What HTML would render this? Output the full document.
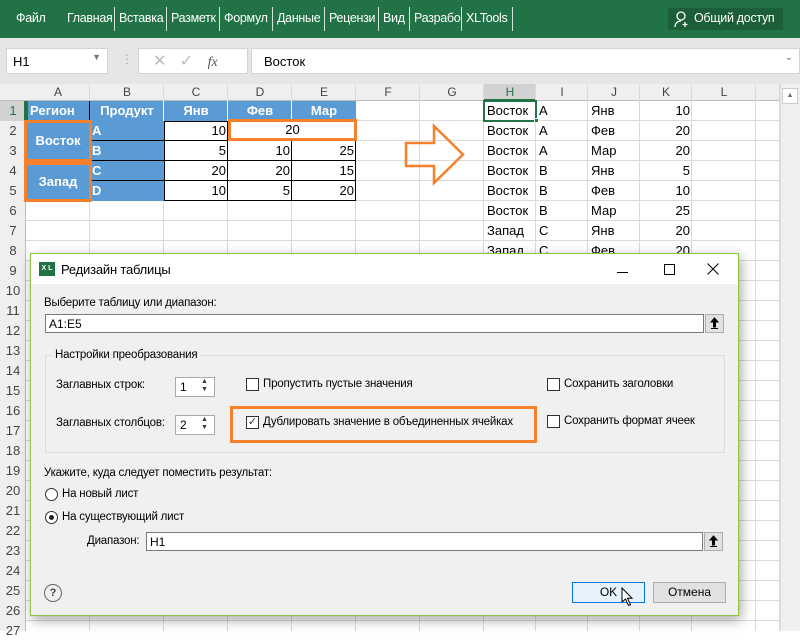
<!DOCTYPE html>
<html><head><meta charset="utf-8">
<style>
*{box-sizing:border-box;margin:0;padding:0}
body{width:800px;height:631px;overflow:hidden;background:#fff;font-family:"Liberation Sans","DejaVu Sans",sans-serif;position:relative}
.a{position:absolute}
.rib{left:0;top:0;width:800px;height:38px;background:#217346;color:#fff;font-size:12.5px;letter-spacing:-0.3px}
.rib span{position:absolute;top:11px}
.sep{position:absolute;top:7px;width:1px;height:24px;background:#fff;opacity:.8}
.c{position:absolute;font-size:13px;line-height:20px;white-space:nowrap}
.ch{position:absolute;top:84px;height:17px;font-size:12px;color:#444;text-align:center;line-height:17px}
.rh{position:absolute;left:0;width:26px;height:20px;font-size:13px;color:#444;text-align:center;line-height:20px}
.blue{background:#5b9bd5;color:#fff;font-weight:bold}
.dl{font-size:11.5px;letter-spacing:-0.2px;color:#000;position:absolute;white-space:nowrap}
.inp{position:absolute;background:#fff;border:1px solid #7a7a7a;font-size:12px;padding:2px 3px}
.ub{position:absolute;width:19px;height:19px;background:#e1e1e1;border:1px solid #adadad}
.cb{position:absolute;width:13px;height:13px;border:1px solid #333;background:#fff}
</style></head><body>
<div class="a rib">
<span style="left:16px">Файл</span>
<span style="left:67px">Главная</span><div class="sep" style="left:114px"></div>
<span style="left:119px">Вставка</span><div class="sep" style="left:166px"></div>
<span style="left:171px">Разметк</span><div class="sep" style="left:219px"></div>
<span style="left:224px">Формул</span><div class="sep" style="left:272px"></div>
<span style="left:277px">Данные</span><div class="sep" style="left:324px"></div>
<span style="left:329px">Рецензи</span><div class="sep" style="left:378px"></div>
<span style="left:383px">Вид</span><div class="sep" style="left:409px"></div>
<span style="left:414px">Разрабо</span><div class="sep" style="left:461px"></div>
<span style="left:466px">XLTools</span><div class="sep" style="left:512px"></div>
<div class="a" style="left:668px;top:8px;width:115px;height:22px;background:#1b5e38"></div>
<svg class="a" style="left:673px;top:10px" width="18" height="18" viewBox="0 0 18 18" fill="none" stroke="#fff" stroke-width="1.3"><circle cx="8" cy="6" r="4"/><path d="M2 17c0-4 3-6 6-6M12 12v5M9.5 14.5h5"/></svg>
<span style="left:694px">Общий доступ</span>
</div>
<div class="a" style="left:0;top:38px;width:800px;height:46px;background:#e6e6e6"></div>
<div class="a" style="left:6px;top:48px;width:102px;height:26px;background:#fff;border:1px solid #d4d4d4;font-size:13px;padding:5px 6px">H1<span style="position:absolute;right:6px;top:3px;color:#777;font-size:9px">▼</span></div>
<div class="a" style="left:121px;top:52px;color:#aaa;font-size:12px">⋮</div>
<div class="a" style="left:138px;top:48px;width:110px;height:26px;background:#fff;border:1px solid #d4d4d4;color:#bbb;font-size:16px;padding:2px 14px">✕ &nbsp; ✓ <span style="color:#555;font-style:italic;font-family:'Liberation Serif',serif;font-size:14px;margin-left:10px">fx</span></div>
<div class="a" style="left:251px;top:48px;width:549px;height:26px;background:#fff;border:1px solid #d4d4d4;font-size:13px;padding:5px 12px">Восток<span style="position:absolute;right:6px;top:3px;color:#777;font-size:10px">⌄</span></div>
<div class="a" style="left:0;top:84px;width:780px;height:17px;background:#efefef;border-bottom:1px solid #bdbdbd"></div>
<div class="a" style="left:0;top:101px;width:26px;height:530px;background:#efefef;border-right:1px solid #bdbdbd"></div>
<div class="a" style="left:484px;top:84px;width:52px;height:17px;background:#d2d2d2;border-bottom:2px solid #217346"></div>
<div class="a" style="left:0;top:101px;width:26px;height:20px;background:#d2d2d2;border-right:2px solid #217346"></div>
<div class="a" style="left:26px;top:101px;width:754px;height:530px;background-image:repeating-linear-gradient(to bottom,transparent 0 19px,#dadada 19px 20px)"></div>
<div class="a" style="left:780px;top:84px;width:20px;height:547px;background:#f0f0f0;border-left:1px solid #ddd"></div>
<div class="a" style="left:782px;top:88px;width:16px;height:16px;background:#fff;border:1px solid #ccc;font-size:7px;text-align:center;color:#666;line-height:14px">▲</div>
<div id="g"></div>
<script>
var cols=[26,90,164,228,292,356,420,484,536,588,640,692,756,780],L="ABCDEFGHIJKL",h="";
for(var i=0;i<12;i++){h+='<div class="ch" style="left:'+cols[i]+'px;width:'+(cols[i+1]-cols[i])+'px;'+(i==7?'color:#217346':'')+'">'+L[i]+'</div>';}
for(var i=1;i<cols.length;i++){h+='<div class="a" style="left:'+(cols[i]-1)+'px;top:84px;width:1px;height:547px;background:#dadada"></div>';}
for(var r=1;r<=27;r++){h+='<div class="rh" style="top:'+(101+20*(r-1))+'px;'+(r==1?'color:#217346':'')+'">'+r+'</div>';}
document.getElementById('g').innerHTML=h;
</script>
<div class="c blue" style="left:26px;top:101px;width:330px;height:20px"></div>
<div class="c blue" style="left:26px;top:121px;width:138px;height:80px"></div>
<div class="c" style="left:164px;top:121px;width:192px;height:80px;background:#fff;border:1px solid #000"></div>
<div class="a" style="left:164px;top:140px;width:192px;height:1px;background:#000"></div>
<div class="a" style="left:164px;top:160px;width:192px;height:1px;background:#000"></div>
<div class="a" style="left:164px;top:180px;width:192px;height:1px;background:#000"></div>
<div class="a" style="left:227px;top:121px;width:1px;height:80px;background:#000"></div>
<div class="a" style="left:291px;top:141px;width:1px;height:60px;background:#000"></div>
<div class="a" style="left:89px;top:101px;width:1px;height:100px;background:#000"></div>
<div class="a" style="left:163px;top:101px;width:1px;height:20px;background:#fff"></div>
<div class="a" style="left:227px;top:101px;width:1px;height:20px;background:#fff"></div>
<div class="a" style="left:291px;top:101px;width:1px;height:20px;background:#fff"></div>
<div class="a" style="left:90px;top:140px;width:74px;height:1px;background:#000"></div>
<div class="a" style="left:90px;top:160px;width:74px;height:1px;background:#000"></div>
<div class="a" style="left:90px;top:180px;width:74px;height:1px;background:#000"></div>
<div class="a" style="left:26px;top:101px;width:2px;height:20px;background:#217346"></div>
<div class="c blue" style="left:30px;top:101px">Регион</div>
<div class="c blue" style="left:90px;top:101px;width:74px;text-align:center;background:none">Продукт</div>
<div class="c blue" style="left:164px;top:101px;width:64px;text-align:center;background:none">Янв</div>
<div class="c blue" style="left:228px;top:101px;width:64px;text-align:center;background:none">Фев</div>
<div class="c blue" style="left:292px;top:101px;width:64px;text-align:center;background:none">Мар</div>
<div class="c blue" style="left:24px;top:120px;width:68px;height:42px;border:3px solid #f7802b;text-align:center;line-height:36px">Восток</div>
<div class="c blue" style="left:24px;top:162px;width:68px;height:40px;border:3px solid #f7802b;text-align:center;line-height:34px">Запад</div>
<div class="c" style="left:92px;top:121px;color:#fff;font-weight:bold">A</div>
<div class="c" style="left:92px;top:141px;color:#fff;font-weight:bold">B</div>
<div class="c" style="left:92px;top:161px;color:#fff;font-weight:bold">C</div>
<div class="c" style="left:92px;top:181px;color:#fff;font-weight:bold">D</div>
<div class="c" style="left:164px;top:121px;width:62px;text-align:right">10</div>
<div class="c" style="left:164px;top:141px;width:62px;text-align:right">5</div>
<div class="c" style="left:164px;top:161px;width:62px;text-align:right">20</div>
<div class="c" style="left:164px;top:181px;width:62px;text-align:right">10</div>
<div class="c" style="left:228px;top:141px;width:62px;text-align:right">10</div>
<div class="c" style="left:228px;top:161px;width:62px;text-align:right">20</div>
<div class="c" style="left:228px;top:181px;width:62px;text-align:right">5</div>
<div class="c" style="left:292px;top:141px;width:62px;text-align:right">25</div>
<div class="c" style="left:292px;top:161px;width:62px;text-align:right">15</div>
<div class="c" style="left:292px;top:181px;width:62px;text-align:right">20</div>
<div class="c" style="left:228px;top:119px;width:129px;height:22px;border:3px solid #f7802b;background:#fff;text-align:center;line-height:16px">20</div>
<svg class="a" style="left:403px;top:123px" width="64" height="64" viewBox="0 0 64 64"><path d="M3 20H31V3L60 31.5L31 60V43H3Z" fill="none" stroke="#f7802b" stroke-width="2.5"/></svg>
<div id="rd"></div>
<script>
var d=[["Восток","A","Янв",10],["Восток","A","Фев",20],["Восток","A","Мар",20],["Восток","B","Янв",5],["Восток","B","Фев",10],["Восток","B","Мар",25],["Запад","C","Янв",20],["Запад","C","Фев",20]],h="";
d.forEach(function(r,i){var t=101+20*i;h+='<div class="c" style="left:487px;top:'+t+'px">'+r[0]+'</div><div class="c" style="left:539px;top:'+t+'px">'+r[1]+'</div><div class="c" style="left:591px;top:'+t+'px">'+r[2]+'</div><div class="c" style="left:640px;top:'+t+'px;width:50px;text-align:right">'+r[3]+'</div>';});
document.getElementById('rd').innerHTML=h;
</script>
<div class="a" style="left:483px;top:100px;width:54px;height:22px;border:2px solid #217346"></div>
<div class="a" style="left:534px;top:118px;width:5px;height:5px;background:#217346;border:1px solid #fff"></div>
<div class="a" style="left:30px;top:253px;width:709px;height:363px;background:#f0f0f0;border:1px solid #8cc63f;box-shadow:2px 4px 12px rgba(0,0,0,.35)">
<div class="a" style="left:0;top:0;width:707px;height:30px;background:#fff"></div>
<div class="a" style="left:8px;top:8px;width:16px;height:14px;background:#217346;color:#fff;font-size:7px;font-weight:bold;line-height:14px;text-align:center">X L</div>
<div class="dl" style="left:30px;top:8px;font-size:13px">Редизайн таблицы</div>
<div class="a" style="left:586px;top:18px;width:11px;height:1px;background:#000"></div>
<div class="a" style="left:633px;top:10px;width:11px;height:11px;border:1px solid #000"></div>
<svg class="a" style="left:676px;top:9px" width="12" height="12" viewBox="0 0 12 12"><path d="M0.5 0.5L11.5 11.5M11.5 0.5L0.5 11.5" stroke="#000" stroke-width="1"/></svg>
<div class="dl" style="left:13px;top:43px">Выберите таблицу или диапазон:</div>
<div class="inp" style="left:14px;top:60px;width:659px;height:19px">A1:E5</div>
<div class="ub" style="left:674px;top:60px"><svg width="17" height="17" viewBox="0 0 17 17"><path d="M8.5 3L5 7H7.5V12H9.5V7H12Z M5 13.5H12" fill="#000" stroke="#000" stroke-width="1"/></svg></div>
<div class="a" style="left:14px;top:101px;width:680px;height:98px;border:1px solid #dcdcdc"></div>
<div class="dl" style="left:21px;top:95px;background:#f0f0f0;padding:0 3px">Настройки преобразования</div>
<div class="dl" style="left:25px;top:125px">Заглавных строк:</div>
<div class="inp" style="left:144px;top:123px;width:40px;height:20px;border-color:#aaa;padding:2px 4px">1</div>
<div class="dl" style="left:170px;top:124px;font-size:7px;line-height:8px;color:#333">▲<br>▼</div>
<div class="dl" style="left:25px;top:163px">Заглавных столбцов:</div>
<div class="inp" style="left:144px;top:161px;width:40px;height:20px;border-color:#aaa;padding:2px 4px">2</div>
<div class="dl" style="left:170px;top:162px;font-size:7px;line-height:8px;color:#333">▲<br>▼</div>
<div class="cb" style="left:215px;top:124px"></div>
<div class="dl" style="left:232px;top:124px">Пропустить пустые значения</div>
<div class="a" style="left:199px;top:152px;width:307px;height:37px;border:3px solid #f7802b"></div>
<div class="cb" style="left:215px;top:162px;font-size:11px;line-height:10px;text-align:center;color:#333">✓</div>
<div class="dl" style="left:232px;top:162px">Дублировать значение в объединенных ячейках</div>
<div class="cb" style="left:516px;top:124px"></div>
<div class="dl" style="left:533px;top:124px">Сохранить заголовки</div>
<div class="cb" style="left:516px;top:161px"></div>
<div class="dl" style="left:533px;top:161px">Сохранить формат ячеек</div>
<div class="dl" style="left:13px;top:213px">Укажите, куда следует поместить результат:</div>
<div class="a" style="left:14px;top:234px;width:13px;height:13px;border:1px solid #333;border-radius:50%;background:#fff"></div>
<div class="dl" style="left:31px;top:234px">На новый лист</div>
<div class="a" style="left:14px;top:257px;width:13px;height:13px;border:1px solid #333;border-radius:50%;background:#fff"><div class="a" style="left:3px;top:3px;width:5px;height:5px;border-radius:50%;background:#222"></div></div>
<div class="dl" style="left:31px;top:257px">На существующий лист</div>
<div class="dl" style="left:56px;top:281px">Диапазон:</div>
<div class="inp" style="left:115px;top:278px;width:557px;height:19px">H1</div>
<div class="ub" style="left:673px;top:278px"><svg width="17" height="17" viewBox="0 0 17 17"><path d="M8.5 3L5 7H7.5V12H9.5V7H12Z M5 13.5H12" fill="#000" stroke="#000" stroke-width="1"/></svg></div>
<div class="a" style="left:13px;top:330px;width:18px;height:18px;border:1px solid #666;border-radius:50%;font-size:11px;text-align:center;line-height:16px;color:#444;font-weight:bold">?</div>
<div class="a" style="left:541px;top:328px;width:73px;height:21px;background:#e5f1fb;border:1px solid #0078d7;font-size:12px;text-align:center;line-height:19px">OK</div>
<svg class="a" style="left:590px;top:333px" width="14" height="20" viewBox="0 0 14 20"><path d="M1 1V15L4.5 12L7.5 18.5L9.5 17.5L6.5 11.3H11Z" fill="#fff" stroke="#000" stroke-width="1"/></svg>
<div class="a" style="left:622px;top:328px;width:73px;height:21px;background:#e1e1e1;border:1px solid #adadad;font-size:12px;text-align:center;line-height:19px">Отмена</div>
</div>
</body></html>
